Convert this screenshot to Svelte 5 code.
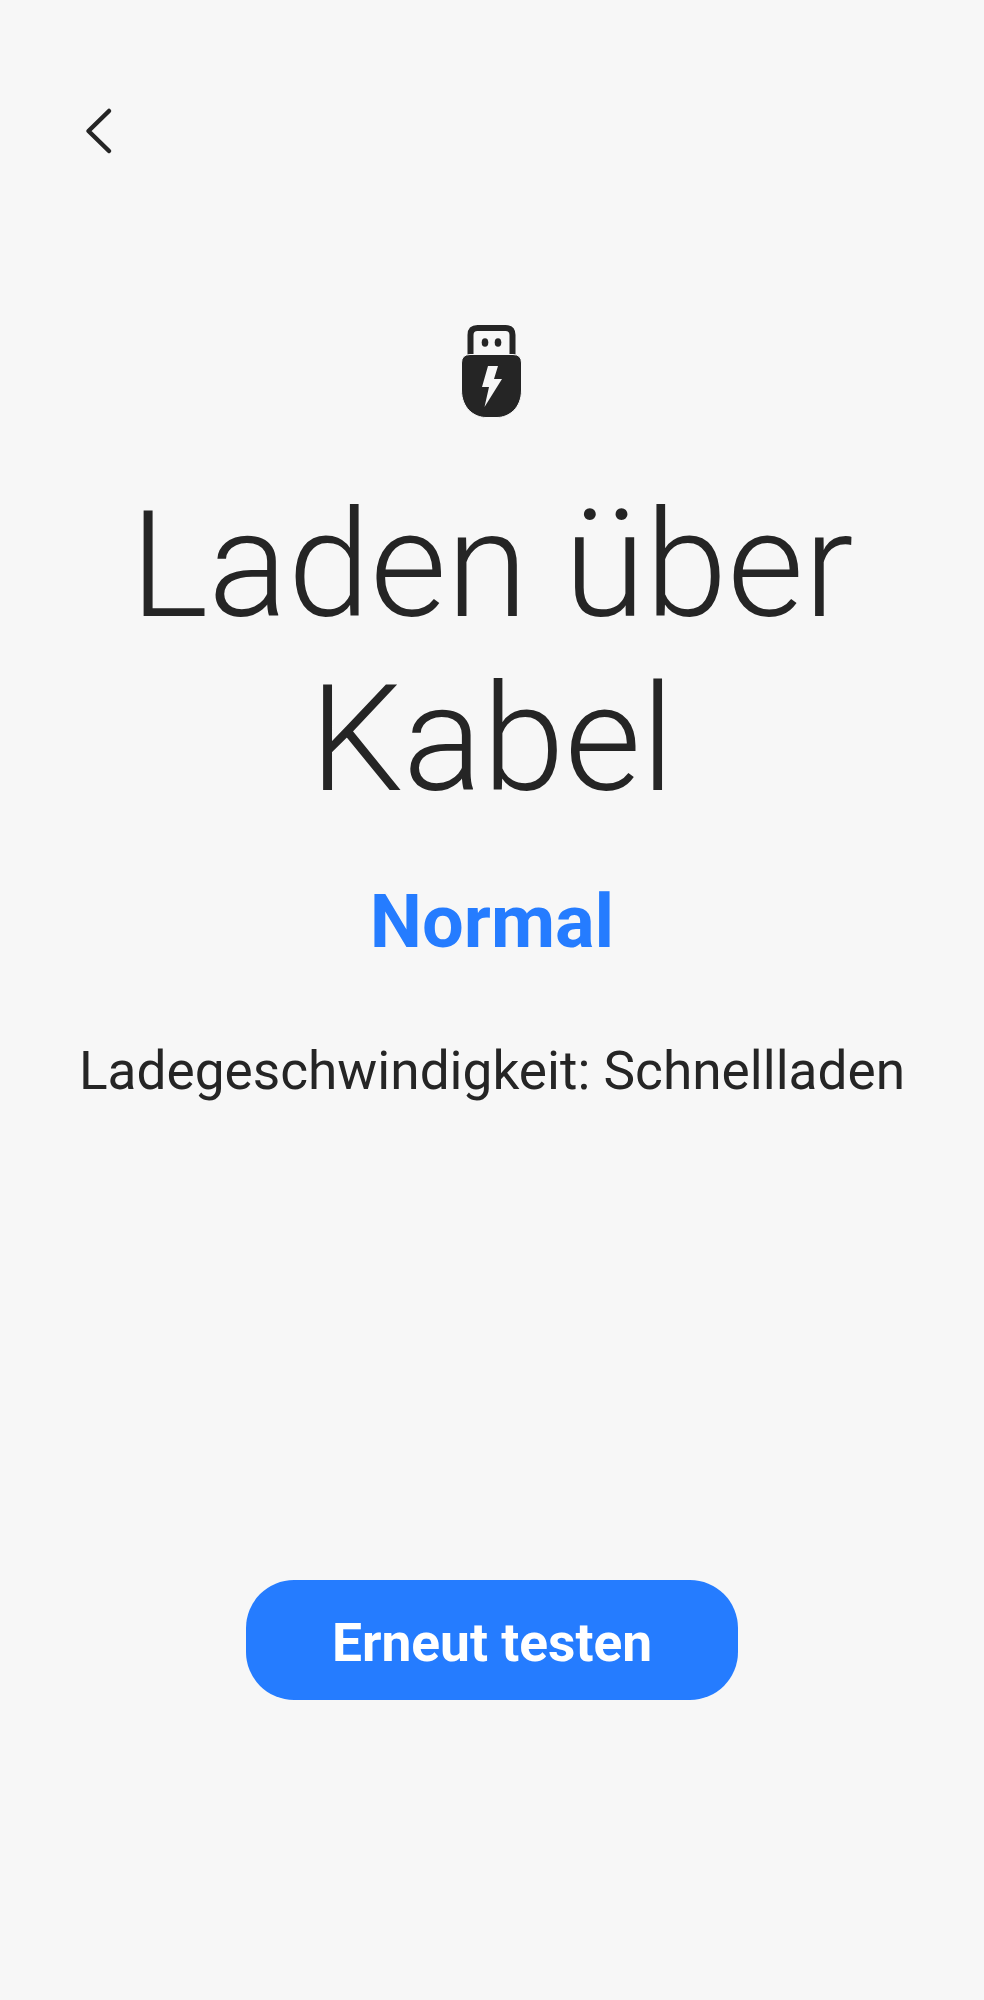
<script lang="ts">
  const title = "Laden über Kabel";
  const speed = "Normal";
  const detail = "Ladegeschwindigkeit: Schnellladen";
</script>

<main class="page">
  <button class="back" aria-label="Zurück">
    <svg width="80" height="80" viewBox="0 0 80 80" fill="none">
      <path d="M49 21 L28.500 41 L49 61" stroke="#252525" stroke-width="4.500" stroke-linecap="round" stroke-linejoin="round" />
    </svg>
  </button>

  <div class="icon">
    <svg width="124" height="120" viewBox="0 0 124 120">
      <path d="M40.500 46 V 25 Q 40.500 18 47.500 18 H 75.500 Q 82.500 18 82.500 25 V 46" fill="none" stroke="#252525" stroke-width="6" />
      <ellipse cx="55" cy="32.500" rx="3.300" ry="4.300" fill="#252525" />
      <ellipse cx="68" cy="32.500" rx="3.300" ry="4.300" fill="#252525" />
      <path d="M31.500 53 Q 31.500 44.500 40 44.500 H 83 Q 91.500 44.500 91.500 53 V 80 C 91.500 98 79 107.500 67 107.500 H 56 C 44 107.500 31.500 98 31.500 80 Z" fill="#252525" stroke="#f7f7f7" stroke-width="1" />
      <path d="M58 56 H 68 L 64 69 H 72 L 54.500 97 L 59 77 H 52 Z" fill="#f7f7f7" />
    </svg>
  </div>

  <h1 class="title">{title}</h1>
  <p class="speed">{speed}</p>
  <p class="detail">{detail}</p>

  <div class="actions">
    <button class="retry">Erneut testen</button>
  </div>
</main>

<style>
  :global(body) {
    margin: 0;
    background: #f7f7f7;
  }
  .page {
    height: 2000px;
    box-sizing: border-box;
    padding-top: 90px;
    display: flex;
    flex-direction: column;
    align-items: center;
    font-family: Roboto, "Liberation Sans", sans-serif;
    color: #252525;
  }
  button {
    font-family: inherit;
    border: none;
  }
  .back {
    align-self: flex-start;
    margin-left: 60px;
    padding: 0;
    width: 80px;
    height: 80px;
    background: none;
  }
  .back svg,
  .icon svg {
    display: block;
  }
  .icon {
    margin-top: 140px;
    margin-left: -1px;
  }
  .title {
    margin: 49px 0 0;
    width: 800px;
    font-size: 148px;
    line-height: 174px;
    font-weight: 300;
    text-align: center;
  }
  .speed {
    margin: 51px 0 0;
    font-size: 74px;
    line-height: 88px;
    font-weight: 700;
    color: #257cff;
  }
  .detail {
    margin: 74px 0 0;
    font-size: 53.200px;
    line-height: 62px;
    font-weight: 400;
  }
  .actions {
    margin-top: 478px;
  }
  .retry {
    display: block;
    width: 492px;
    height: 120px;
    padding: 6px 0 0;
    border-radius: 48px;
    background: #257cff;
    color: #fff;
    font-size: 53.300px;
    font-weight: 700;
  }
</style>
